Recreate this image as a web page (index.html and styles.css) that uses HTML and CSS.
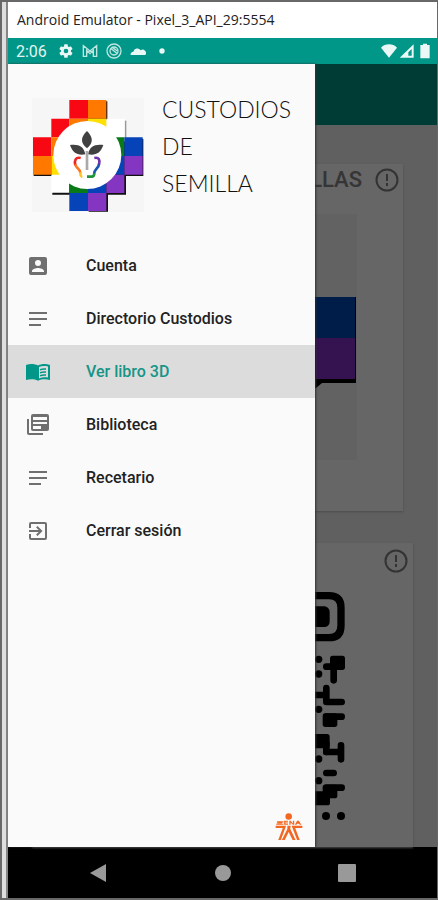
FILE: index.html
```html
<!DOCTYPE html>
<html lang="es">
<head>
<meta charset="utf-8">
<meta name="viewport" content="width=device-width, initial-scale=1">
<title>Custodios de Semilla</title>
<link rel="stylesheet" href="styles.css">
</head>
<body>
<div class="window">
  <div class="device">
    <header class="titlebar">Android Emulator - Pixel_3_API_29:5554</header>
    <div class="statusbar">
      <span class="clock">2:06</span>
      <svg class="status-icon" viewBox="0 0 24 24"><path d="M19.4 13a7.500 7.500 0 0 0 0-2l2.100-1.600a.5.5 0 0 0 .1-.6l-2-3.500a.5.5 0 0 0-.6-.2l-2.500 1a7 7 0 0 0-1.700-1l-.4-2.700a.5.5 0 0 0-.5-.4h-4a.5.5 0 0 0-.5.4L9 5.100a7 7 0 0 0-1.700 1l-2.500-1a.5.5 0 0 0-.6.2l-2 3.500a.5.5 0 0 0 .1.6L4.500 11a7.500 7.500 0 0 0 0 2l-2.200 1.600a.5.5 0 0 0-.1.6l2 3.500c.1.2.4.3.6.2l2.500-1a7 7 0 0 0 1.700 1l.4 2.700c0 .2.2.4.5.4h4c.3 0 .5-.2.500-.4l.4-2.700a7 7 0 0 0 1.700-1l2.500 1c.2.1.5 0 .6-.2l2-3.500a.5.5 0 0 0-.1-.6zM12 15.500a3.500 3.500 0 1 1 0-7 3.500 3.500 0 0 1 0 7z"/></svg>
      <svg class="status-icon" viewBox="0 0 24 24"><path class="line" d="M2 20V4l10 8 10-8v16h-5V11l-5 5-5-5v9zM7 11v9M17 11v9M7 15l5-3 5 3"/></svg>
      <svg class="status-icon" viewBox="0 0 24 24"><circle class="line" cx="12" cy="12" r="10.500"/><circle class="line" cx="12" cy="12" r="6"/><path class="line" d="M7 8l10 8M10 7l7 5"/></svg>
      <svg class="status-icon" viewBox="0 0 24 24"><path d="M1 18a4 4 0 0 1 4-5 6 6 0 0 1 11-2 5 5 0 0 1 7 7z"/></svg>
      <svg class="status-icon" viewBox="0 0 24 24"><circle cx="12" cy="12" r="4"/></svg>
      <span class="signals">
        <svg class="status-icon" viewBox="0 0 24 24"><path d="M0 7a17 17 0 0 1 24 0L12 22z"/></svg>
        <svg class="status-icon" viewBox="0 0 24 24"><path fill-rule="evenodd" d="M1 22 22 2v20zM14 19h5V9l-5 5z"/></svg>
        <svg class="status-icon" viewBox="0 0 24 24"><path d="M9 1h6v2h4v20H5V3h4z"/></svg>
      </span>
    </div>
    <div class="screen">
      <main class="page">
        <div class="appbar"></div>
        <section class="card card-seeds">
          <div class="card-head">
            <h2>SEMILLAS</h2>
            <svg class="info" viewBox="0 0 24 24"><circle cx="12" cy="12" r="10.500"/><path d="M12 6v7M12 15v3"/></svg>
          </div>
          <svg class="seed-art" viewBox="0 0 60 246">
            <path fill="#626262" d="M0 0h60v246H0z"/>
            <path d="M17 83h42v86H25l-6 5h-2z"/>
            <path fill="#001d4a" d="M19 83h39v41H19z"/>
            <path fill="#341350" d="M19 124h39v41H19z"/>
          </svg>
        </section>
        <section class="card card-qr">
          <div class="card-head">
            <svg class="info" viewBox="0 0 24 24"><circle cx="12" cy="12" r="10.500"/><path d="M12 6v7M12 15v3"/></svg>
          </div>
          <svg class="qr" viewBox="37 30 99 702">
            <path class="ring" d="M30 47h58q36 0 36 36v54q0 36-36 36H30"/>
            <rect x="20" y="79" width="70" height="62" rx="16"/>
            <circle cx="57" cy="238" r="11"/><circle cx="57" cy="282" r="11"/><circle cx="57" cy="388" r="11"/><circle cx="57" cy="537" r="11"/><circle cx="57" cy="602" r="11"/><circle cx="79" cy="708" r="12"/><circle cx="124" cy="708" r="12"/>
            <rect x="91" y="227" width="45" height="43" rx="8"/>
            <path class="bar" d="M80 260h22v41M46 345h34M80 324v42h46M80 410h46M103 516h-23M80 516h44M124 496v42M80 579h22M80 623h46"/>
            <rect x="69" y="400" width="44" height="41" rx="8"/>
            <rect x="36" y="462" width="54" height="43" rx="8"/>
            <path class="bar" d="M80 490v26"/>
            <rect x="69" y="614" width="44" height="41" rx="8"/>
            <rect x="36" y="634" width="55" height="42" rx="8"/>
          </svg>
        </section>
      </main>
      <aside class="drawer">
        <div class="brand">
          <svg class="logo" viewBox="37 37 336 342">
            <path fill="#f6f6f7" d="M37 37h336v342H37z"/>
            <path fill="#111" d="M205 47h58v55h-58zM42 211h55v60H42zM98 270h56v57H98zM320 160h51v111h-52v56h-54v51h-58v-60z"/>
            <path fill="#999" d="M315 105h5v52h-5z"/>
            <path fill="#fff" d="M260 99h55v57h-55zM95 267h54v54H95z"/>
            <path fill="#f80813" d="M149 43h56v56h-56zM95 99h54v56H95zM40 155h55v56H40z"/>
            <path fill="#ff7900" d="M205 43h55v56h-55zM149 99h56v56h-56zM95 155h54v56H95zM40 211h55v56H40z"/>
            <path fill="#ffe000" d="M205 99h55v56h-55zM95 211h54v56H95z"/>
            <path fill="#087b18" d="M260 155h54v56h-54zM149 267h56v55h-56z"/>
            <path fill="#0642b8" d="M314 155h55v56h-55zM260 211h54v56h-54zM205 267h55v55h-55zM149 322h56v54h-56z"/>
            <path fill="#8435c2" d="M314 211h55v56h-55zM260 267h54v55h-54zM205 322h55v54h-55z"/>
            <circle cx="203" cy="208" r="102" fill="#fff"/>
            <g fill="#414141"><path d="M202 136c-20 19-20 36 0 52 19-16 19-33 0-52z"/><path d="M151 178c27-3 41 4 46 28-25 4-38-5-46-28z"/><path d="M251 178c-27-3-41 4-46 28 25 4 38-5 46-28z"/></g>
            <path fill="none" stroke="#aaa" stroke-width="8" d="M202 196v57"/>
            <g fill="none" stroke-width="8"><path stroke="#ee2525" d="M183 217c-15-4-20 8-16 22"/><path stroke="#fa7921" d="M167 236c2 13 14 11 15 26"/><path stroke="#ffc323" d="M182 260c0 8 0 13 6 13"/><path stroke="#21943b" d="M202 273h14q8 0 8-11"/><path stroke="#1754b4" d="M224 263c0-13 14-15 14-29"/><path stroke="#7131a8" d="M238 236c4-14-1-22-14-19"/></g>
          </svg>
          <h1>CUSTODIOS<br>DE<br>SEMILLA</h1>
        </div>
        <nav class="menu">
          <a href="#cuenta"><svg viewBox="0 0 24 24"><path d="M3 5v14a2 2 0 0 0 2 2h14a2 2 0 0 0 2-2V5a2 2 0 0 0-2-2H5a2 2 0 0 0-2 2zm12 4a3 3 0 1 1-6 0 3 3 0 0 1 6 0zm-9 8c0-2 4-3.100 6-3.100s6 1.100 6 3.100v1H6z"/></svg>Cuenta</a>
          <a href="#directorio"><svg viewBox="0 0 24 24"><path d="M3 5h18v2H3zM3 11h18v2H3zM3 17h12v2H3z"/></svg>Directorio Custodios</a>
          <a href="#libro" class="active" aria-current="page"><svg viewBox="0 0 24 24"><path fill-rule="evenodd" d="M0 5c3.500-1.500 8.500-1.500 12 .5 3.500-2 8.500-2 12-.5v15c-3.500-1.200-8.500-1.200-12 .7C8.500 18.800 3.500 18.800 0 20zM13 7v11.500c2.500-1.300 6-1.500 9-1V6.500c-3-.7-6.500-.7-9 .5z"/><path d="M14 9c2-.9 4-1 6-.7v1.500c-2-.3-4-.2-6 .6zM14 12c2-.9 4-1 6-.7v1.500c-2-.3-4-.2-6 .6zM14 15c2-.9 4-1 6-.7v1.500c-2-.3-4-.2-6 .6z"/></svg>Ver libro 3D</a>
          <a href="#biblioteca"><svg viewBox="0 0 24 24"><path fill-rule="evenodd" d="M3 6H1v14a2 2 0 0 0 2 2h14v-2H3zM7 1h14a2 2 0 0 1 2 2v13a2 2 0 0 1-2 2H7a2 2 0 0 1-2-2V3a2 2 0 0 1 2-2zm0 3v3h14V4zM7 9v2h14V9zM7 13v3h8v-3z"/></svg>Biblioteca</a>
          <a href="#recetario"><svg viewBox="0 0 24 24"><path d="M3 5h18v2H3zM3 11h18v2H3zM3 17h12v2H3z"/></svg>Recetario</a>
          <a href="#salir"><svg viewBox="0 0 24 24"><path d="M10.100 15.600 11.500 17l5-5-5-5-1.400 1.400 2.600 2.600H3v2h9.700zM19 3H5a2 2 0 0 0-2 2v4h2V5h14v14H5v-4H3v4a2 2 0 0 0 2 2h14a2 2 0 0 0 2-2V5a2 2 0 0 0-2-2z"/></svg>Cerrar sesión</a>
        </nav>
        <svg class="sena" viewBox="46 40 86 84"><circle cx="88" cy="50" r="10"/><path d="M52 64h20v4H54v4h18v3H50v-4h18v-3H52zM74 63h12v3h-8v2h8v3h-8v2h8v2H74zM90 75V63h4l7 8v-8h4v12h-4l-7-7v7zM107 75l7-12h5l8 12h-5l-2-3h-6l-2 3z"/><path d="M48 78h32L64 122h-8l14-37H48zM130 78H97l17 44h8l-14-37h22zM84 78h10l-1 10 16 34h-9L88 97 76 122h-9l17-34z"/></svg>
      </aside>
    </div>
    <footer class="navbar">
      <button aria-label="Atrás"><svg viewBox="0 0 18 18"><path d="M17 0v18L1 9z"/></svg></button>
      <button aria-label="Inicio"><svg viewBox="0 0 18 18"><circle cx="9" cy="9" r="8"/></svg></button>
      <button aria-label="Recientes"><svg viewBox="0 0 18 18"><rect width="18" height="18" rx="1"/></svg></button>
    </footer>
  </div>
</div>
</body>
</html>
```
FILE: styles.css
```css
* { box-sizing: border-box; }

body {
  margin: 0;
  font-family: Roboto, sans-serif;
  background: #fff;
}

svg { display: block; flex: none; }

.window {
  display: flex;
  min-height: 100vh;
  padding-left: 4px;
  border: 2px solid #686868;
  border-right-width: 1px;
  background: #dedede;
}

.device {
  display: flex;
  flex: 1;
  flex-direction: column;
  min-width: 0;
  border-left: 2px solid #858585;
  background: #fff;
}

.titlebar {
  padding: 0 9px;
  font-family: "Open Sans", sans-serif;
  font-size: 14px;
  line-height: 36px;
  color: #222;
  white-space: nowrap;
}

.statusbar {
  display: flex;
  align-items: center;
  gap: 8px;
  height: 26px;
  padding: 0 4px 0 8px;
  font-size: 16px;
  color: #e2f5f2;
  background: #009688;
}

.clock { margin-right: 3px; }
.status-icon { width: 16px; height: 16px; fill: #e9f8f6; }
.status-icon .line { fill: none; stroke: #bfe6e1; stroke-width: 2; }
.signals { display: flex; gap: 2px; margin-left: auto; }

.screen {
  position: relative;
  display: flex;
  flex: 1;
}

.page {
  display: flex;
  flex: 1;
  flex-direction: column;
  min-width: 0;
  background: #606060;
}

.appbar { height: 61px; background: #003c36; }

.card {
  display: flex;
  flex-direction: column;
  align-items: flex-end;
  margin-left: 24px;
  background: #666;
  box-shadow: 0 1px 2px #4c4c4c;
}

.card-seeds { margin-top: 39px; margin-right: 34px; padding-bottom: 51px; }
.card-qr { flex: 1; margin-top: 32px; margin-right: 24px; padding-bottom: 16px; }

.card-head {
  display: flex;
  align-items: center;
  gap: 13px;
  padding: 4px 4px 0 0;
}

.card-qr .card-head { padding: 6px 5px 0 0; }

.card-head h2 {
  margin: 0;
  font-size: 22px;
  font-weight: 500;
  line-height: 24px;
  color: #353535;
}

.info { width: 24px; height: 24px; fill: none; stroke: #333; stroke-width: 2; }
.seed-art { width: 60px; height: 246px; margin: 22px 46px 0 0; }
.qr { width: 33px; height: 234px; margin: 17px 68px 0 0; }
.qr .ring { fill: none; stroke: #000; stroke-width: 22; }
.qr .bar { fill: none; stroke: #000; stroke-width: 20; stroke-linecap: round; stroke-linejoin: round; }

.drawer {
  position: absolute;
  inset: 0 auto 0 0;
  display: flex;
  flex-direction: column;
  width: 307px;
  max-width: 86%;
  background: #fafafa;
  box-shadow: 1px 0 2px #333;
}

.brand {
  display: flex;
  gap: 18px;
  padding: 34px 24px 27px;
}

.logo { width: 112px; height: 114px; }

.brand h1 {
  margin: -7px 0 0;
  font-family: Lato, sans-serif;
  font-size: 23px;
  font-weight: 300;
  line-height: 37px;
  color: #111;
}

.menu a {
  display: flex;
  align-items: center;
  gap: 36px;
  height: 53px;
  padding: 0 18px;
  font-size: 16px;
  font-weight: 500;
  color: #222;
  text-decoration: none;
}

.menu svg { width: 24px; height: 24px; fill: #6f6f6f; }
.menu .active { color: #169486; background: #dcdcdc; }
.menu .active svg { fill: #009688; }

.sena {
  width: 28px;
  height: 28px;
  margin: auto 12px 6px auto;
  fill: #f26822;
}

.navbar {
  display: flex;
  align-items: center;
  justify-content: space-between;
  height: 51px;
  padding: 0 81px;
  background: #000;
}

.navbar button { padding: 0; border: 0; background: none; }
.navbar svg { width: 18px; height: 18px; fill: #999; }
```
